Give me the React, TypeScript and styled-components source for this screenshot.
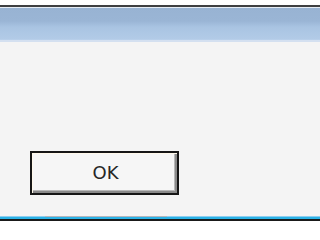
import React from "react";
import styled, { createGlobalStyle } from "styled-components";

const Global = createGlobalStyle`
  html, body { margin: 0; padding: 0; background: #ffffff; }
  body { height: 240px; overflow: hidden; }
`;

const Page = styled.div`
  width: 100%;
  min-width: 240px;
  height: 240px;
  display: flex;
  flex-direction: column;
  background: #ffffff;
  padding-top: 5px;
  box-sizing: border-box;
`;

const TitleBar = styled.div`
  height: 33px;
  border-top: 2px solid #3e3f40;
  border-bottom: 2px solid #d4e0f0;
  background: linear-gradient(
    to bottom,
    #e6edf5 0px,
    #e6edf5 1px,
    #98b3d3 1px,
    #9ab5d5 14px,
    #a9c4e2 20px,
    #b2cbe7 32px,
    #bcd2ec 33px
  );
`;

const Body = styled.div`
  height: 174px;
  background: #f4f4f4;
  display: flex;
  align-items: flex-start;
  padding: 109px 0 0 30px;
  box-sizing: border-box;
`;

const OkButton = styled.button`
  width: 149px;
  height: 44px;
  box-sizing: border-box;
  border: 2px solid #161616;
  background: #f6f6f6;
  box-shadow: inset 1px 1px 0 #fff8ea, inset -2px -2px 0 #8a8a8a,
    inset -3px -3px 0 #b8b8b8;
  font-family: "DejaVu Sans", "Verdana", sans-serif;
  font-size: 18px;
  color: #262626;
  padding: 0 0 1px 2px;
  display: flex;
  align-items: center;
  justify-content: center;
`;

const BottomEdge = styled.div`
  height: 5px;
  display: flex;
  flex-direction: column;
`;

const EdgeTop = styled.div`
  height: 1px;
  background: linear-gradient(
    to right,
    #8fcdee 0px,
    #8fcdee 45px,
    #b4b6bc 45px,
    #b4b6bc 167px,
    #8fcdee 167px
  );
`;

const EdgeLine = styled.div<{ $c: string; $h: number }>`
  height: ${(p) => p.$h}px;
  background: ${(p) => p.$c};
`;

export default function App() {
  return (
    <>
      <Global />
      <Page>
        <TitleBar />
        <Body>
          <OkButton>OK</OkButton>
        </Body>
        <BottomEdge>
          <EdgeTop />
          <EdgeLine $c="#2ab2e6" $h={2} />
          <EdgeLine $c="#1a1a1a" $h={2} />
        </BottomEdge>
      </Page>
    </>
  );
}
